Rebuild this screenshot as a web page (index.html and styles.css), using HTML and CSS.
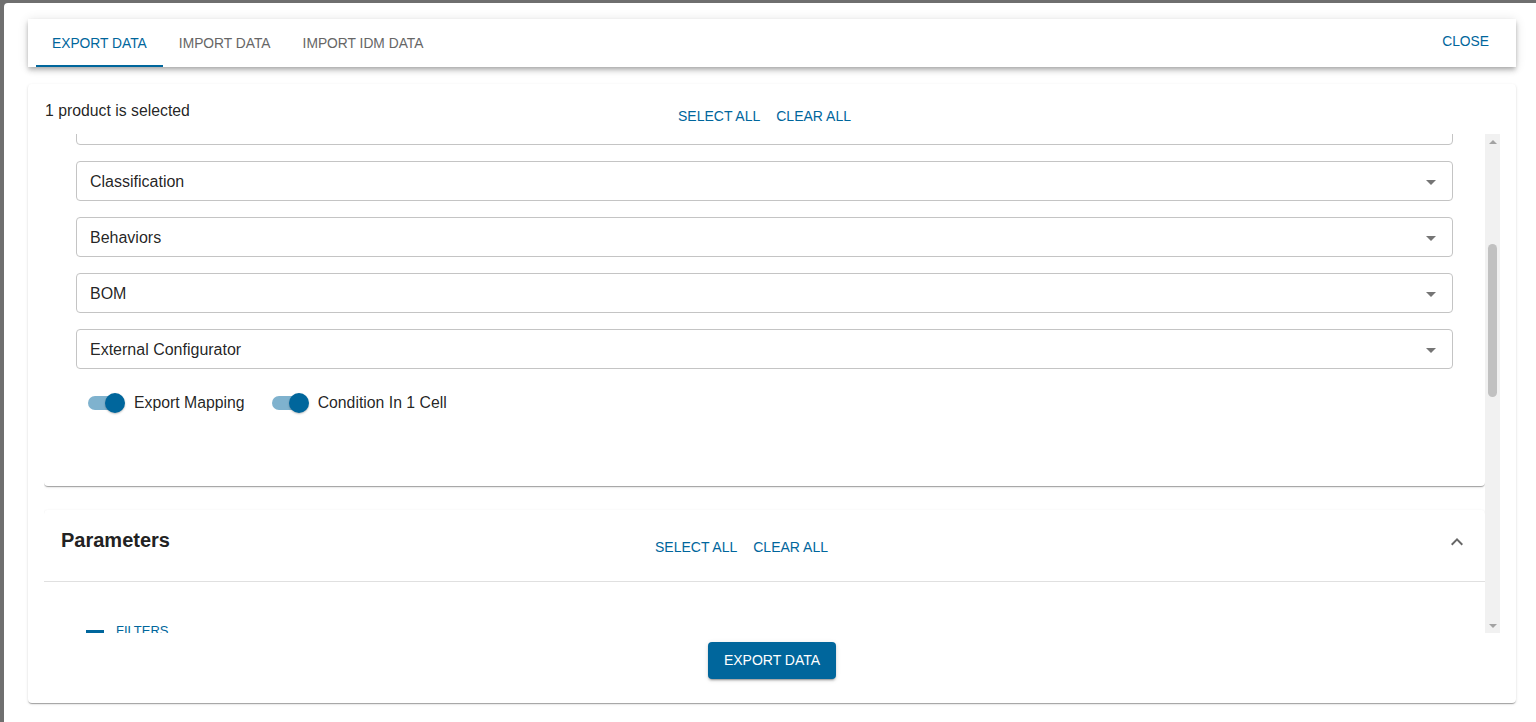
FILE: index.html
```html
<!doctype html>
<html lang="en">
<head>
    <meta charset="UTF-8">
    <meta name="viewport" content="width=device-width, initial-scale=1.0">
    <title>Export Data</title>
    <link rel="stylesheet" href="styles.css">
</head>
<body>
    <div class="dialog">
        <div class="tabbar">
            <button class="tab active">Export Data</button>
            <button class="tab">Import Data</button>
            <button class="tab">Import IDM Data</button>
            <button class="close-btn">Close</button>
        </div>

        <div class="panel">
            <div class="panel-head">
                <div class="selected-count">1 product is selected</div>
                <div class="actions">
                    <button class="text-btn">Select All</button>
                    <button class="text-btn">Clear All</button>
                </div>
            </div>

            <div class="scroll-area">
                <div class="scroll-view">
                    <div class="card options-card">
                        <div class="select-field"><span>Attributes</span><i class="caret"></i></div>
                        <div class="select-field"><span>Assets</span><i class="caret"></i></div>
                        <div class="select-field"><span>Classification</span><i class="caret"></i></div>
                        <div class="select-field"><span>Behaviors</span><i class="caret"></i></div>
                        <div class="select-field"><span>BOM</span><i class="caret"></i></div>
                        <div class="select-field"><span>External Configurator</span><i class="caret"></i></div>
                        <div class="toggles">
                            <label class="toggle">
                                <span class="switch"><span class="track"></span><span class="thumb"></span></span>
                                Export Mapping
                            </label>
                            <label class="toggle">
                                <span class="switch"><span class="track"></span><span class="thumb"></span></span>
                                Condition In 1 Cell
                            </label>
                        </div>
                    </div>

                    <div class="card params-card">
                        <div class="params-head">
                            <h2>Parameters</h2>
                            <div class="actions">
                                <button class="text-btn">Select All</button>
                                <button class="text-btn">Clear All</button>
                            </div>
                            <svg class="chevron" viewBox="0 0 24 24" width="24" height="24">
                                <path d="M12 8l-6 6 1.41 1.41L12 10.83l4.59 4.58L18 14z" fill="#666"/>
                            </svg>
                        </div>
                        <div class="params-body">
                            <div class="filters-toggle"><span class="dash"></span>Filters</div>
                            <div class="select-field"><span>Parameter Group</span><i class="caret"></i></div>
                            <div class="select-field"><span>Parameter Type</span><i class="caret"></i></div>
                        </div>
                    </div>
                </div>

                <div class="scrollbar">
                    <div class="sb-arrow up"></div>
                    <div class="sb-track"><div class="sb-thumb"></div></div>
                    <div class="sb-arrow down"></div>
                </div>
            </div>

            <div class="panel-foot">
                <button class="primary-btn">Export Data</button>
            </div>
        </div>
    </div>
</body>
</html>
```

FILE: styles.css
```css
body {
    margin: 0;
    background: #6f6f6f;
    font-family: "Liberation Sans", Arial, sans-serif;
    color: rgba(0, 0, 0, 0.87);
    overflow: hidden;
    height: 722px;
}
button {
    font-family: inherit;
    background: none;
    border: none;
    cursor: pointer;
    padding: 0;
}
.dialog {
    margin: 3px 0 0 4px;
    width: 1532px;
    height: 719px;
    box-sizing: border-box;
    padding: 16px 20px 0 24px;
    background: #fff;
    border-radius: 4px 0 0 0;
}

/* tabs */
.tabbar {
    display: flex;
    height: 48px;
    padding-left: 8px;
    background: #fff;
    box-shadow: 0 2px 4px -1px rgba(0,0,0,0.2), 0 4px 5px 0 rgba(0,0,0,0.14), 0 1px 10px 0 rgba(0,0,0,0.12);
}
.tab {
    height: 48px;
    padding: 2px 16px 0;
    font-size: 13.8px;
    text-transform: uppercase;
    color: #666;
    border-bottom: 2px solid transparent;
}
.tab.active {
    color: #00669c;
    border-bottom-color: #00669c;
}
.close-btn {
    margin-left: auto;
    margin-right: 19px;
    padding: 0 8px 4px;
    font-size: 13.8px;
    text-transform: uppercase;
    color: #00669c;
}

/* main panel */
.panel {
    margin-top: 17px;
    padding: 16px 16px 24px;
    border-radius: 4px;
    background: #fff;
    box-shadow: 0 2px 1px -1px rgba(0,0,0,0.2), 0 1px 1px 0 rgba(0,0,0,0.14), 0 1px 3px 0 rgba(0,0,0,0.12);
}
.panel-head {
    display: flex;
    align-items: flex-start;
    height: 34px;
}
.selected-count {
    width: 625px;
    padding-left: 1px;
    font-size: 15.8px;
    line-height: 22px;
}
.actions {
    display: flex;
}
.text-btn {
    height: 32px;
    padding: 0 8px;
    font-size: 14px;
    text-transform: uppercase;
    color: #00669c;
}

.scroll-area {
    display: flex;
    height: 499px;
}
.scroll-view {
    flex: 1;
    overflow: hidden;
}
.card {
    background: #fff;
    border-radius: 4px;
    box-shadow: 0 2px 1px -1px rgba(0,0,0,0.2), 0 1px 1px 0 rgba(0,0,0,0.14), 0 1px 3px 0 rgba(0,0,0,0.12);
}
.options-card {
    margin-top: -101px;
    padding: 16px 32px 64px;
    display: flex;
    flex-direction: column;
    gap: 16px;
}
.select-field {
    display: flex;
    align-items: center;
    justify-content: space-between;
    height: 40px;
    box-sizing: border-box;
    padding: 2px 16px 0 13px;
    border: 1px solid #c4c4c4;
    border-radius: 4px;
    font-size: 16px;
}
.caret {
    width: 0;
    height: 0;
    border-left: 5px solid transparent;
    border-right: 5px solid transparent;
    border-top: 5px solid #757575;
}

.toggles {
    display: flex;
    gap: 15px;
    margin-top: -1px;
}
.toggle {
    display: flex;
    align-items: center;
    font-size: 15.8px;
}
.switch {
    position: relative;
    width: 58px;
    height: 38px;
    flex-shrink: 0;
}
.track {
    position: absolute;
    left: 12px;
    top: 12px;
    width: 34px;
    height: 14px;
    border-radius: 7px;
    background: #7fb2ce;
}
.thumb {
    position: absolute;
    left: 29px;
    top: 9px;
    width: 20px;
    height: 20px;
    border-radius: 50%;
    background: #00669c;
    box-shadow: 0 1px 2px rgba(0,0,0,0.25);
}

/* parameters */
.params-card {
    margin-top: 24px;
    padding-bottom: 200px;
}
.params-head {
    display: flex;
    align-items: flex-start;
    height: 72px;
    box-sizing: border-box;
    padding: 16px 16px 0 17px;
    border-bottom: 1px solid #e0e0e0;
}
.params-head h2 {
    width: 586px;
    margin: 0;
    font-size: 20px;
    line-height: 28px;
    font-weight: 700;
    color: #222;
}
.params-head .actions {
    margin-top: 5px;
}
.chevron {
    margin: 4px 0 0 auto;
}
.params-body {
    padding: 41px 32px 0 42px;
    display: flex;
    flex-direction: column;
    gap: 24px;
}
.filters-toggle {
    display: flex;
    align-items: center;
    font-size: 13px;
    text-transform: uppercase;
    color: #00669c;
    line-height: 16px;
}
.dash {
    width: 18px;
    height: 3px;
    margin-right: 12px;
    background: #00669c;
}

/* scrollbar */
.scrollbar {
    width: 15px;
    display: flex;
    flex-direction: column;
    background: #f1f1f1;
}
.sb-arrow {
    height: 15px;
    display: flex;
    align-items: center;
    justify-content: center;
}
.sb-arrow::after {
    content: '';
    border-left: 4px solid transparent;
    border-right: 4px solid transparent;
}
.sb-arrow.up::after {
    border-bottom: 4px solid #a3a3a3;
}
.sb-arrow.down::after {
    border-top: 4px solid #a3a3a3;
}
.sb-track {
    flex: 1;
}
.sb-thumb {
    margin: 95px auto 0;
    width: 9px;
    height: 153px;
    border-radius: 5px;
    background: #c1c1c1;
}

.panel-foot {
    display: flex;
    justify-content: center;
    padding-top: 9px;
}
.primary-btn {
    padding: 6px 16px;
    font-size: 14px;
    line-height: 24.5px;
    text-transform: uppercase;
    color: #fff;
    background: #00669c;
    border-radius: 4px;
    box-shadow: 0 3px 1px -2px rgba(0,0,0,0.2), 0 2px 2px 0 rgba(0,0,0,0.14), 0 1px 5px 0 rgba(0,0,0,0.12);
}
```
